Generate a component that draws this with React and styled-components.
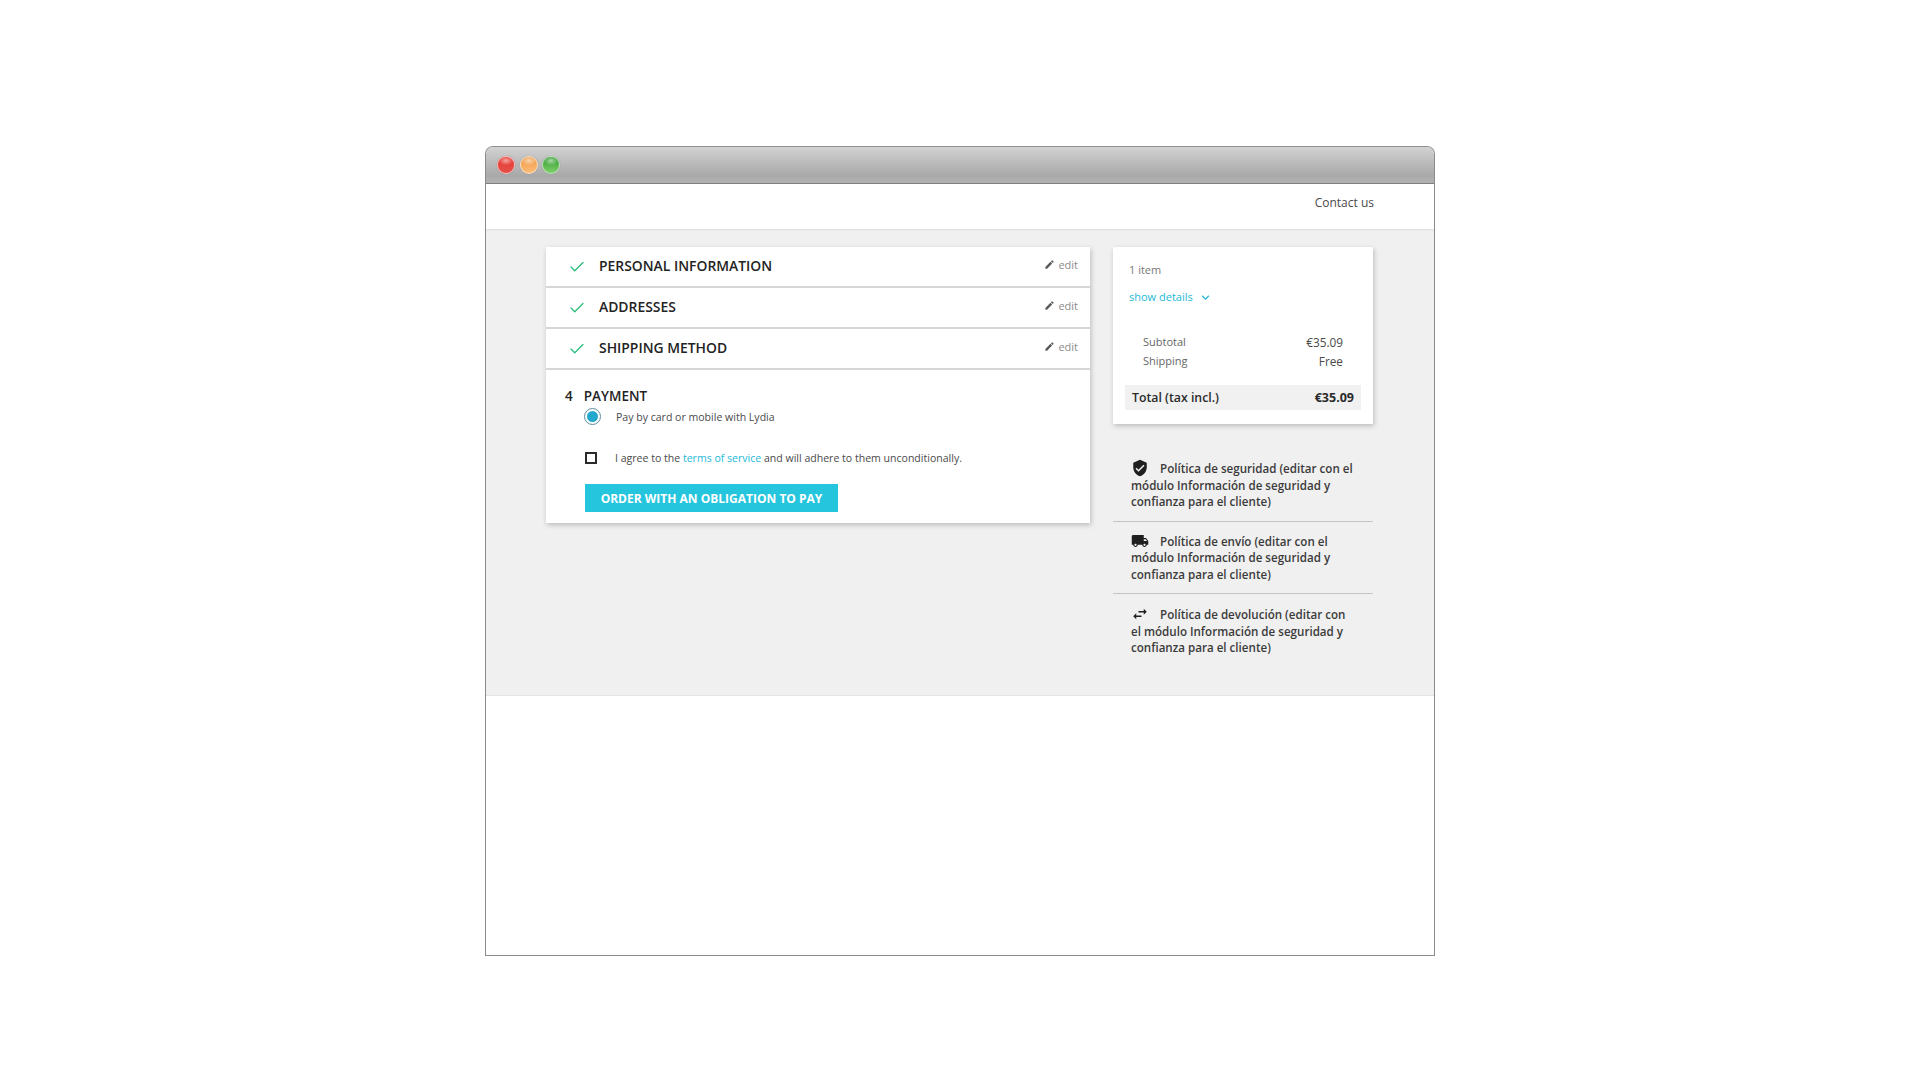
import React from "react";
import styled, { createGlobalStyle } from "styled-components";
import { Check } from "lucide-react";
import {
  MdEdit,
  MdKeyboardArrowDown,
  MdVerifiedUser,
  MdLocalShipping,
  MdSwapHoriz,
} from "react-icons/md";

const GlobalStyle = createGlobalStyle`
  html, body {
    margin: 0;
    background: #fff;
    font-family: "Open Sans", "Noto Sans", sans-serif;
    color: #3d3d3d;
  }
`;

const Page = styled.div`
  width: 1920px;
  height: 1080px;
  padding: 146px 0 0 485px;
  box-sizing: border-box;
`;

const Browser = styled.div`
  width: 950px;
  height: 810px;
  box-sizing: border-box;
  border: 1px solid #8a8a8a;
  border-top-color: #8f8f8f;
  border-radius: 8px 8px 0 0;
  display: flex;
  flex-direction: column;
  background: #fff;
  overflow: hidden;
`;

const TitleBar = styled.div`
  height: 37px;
  flex: none;
  display: flex;
  align-items: center;
  gap: 4.5px;
  padding: 0 0 1px 11px;
  box-sizing: border-box;
  background: linear-gradient(#d2d2d2 0%, #bdbdbd 40%, #a9a9a9 80%, #b2b2b2 100%);
  border-bottom: 1px solid #808080;
`;

const colors = {
  red: "#e8362f, #e4524a",
  orange: "#f09a45, #fbbc78",
  green: "#2f9b2e, #7fd06a",
};

const Light = styled.span`
  width: 18px;
  height: 18px;
  border-radius: 50%;
  box-sizing: border-box;
  border: 1px solid rgba(255, 255, 255, 0.6);
  background: radial-gradient(ellipse 45% 30% at 50% 22%, rgba(255, 255, 255, 0.55), transparent),
    linear-gradient(${(p) => colors[p.$color]});
  box-shadow: 0 0 1px rgba(0, 0, 0, 0.35);
`;

const TopBar = styled.header`
  height: 45px;
  flex: none;
  display: flex;
  justify-content: flex-end;
  align-items: center;
  padding: 0 60px 8px 0;
  box-sizing: border-box;
  font-size: 12px;
  color: #4a4a4a;
  box-shadow: 0 1px 2px rgba(0, 0, 0, 0.08);
  position: relative;
`;

const Main = styled.main`
  height: 467px;
  flex: none;
  box-sizing: border-box;
  background: #f0f0f0;
  padding: 18px 60px 0;
  display: flex;
  align-items: flex-start;
  gap: 23px;
  border-bottom: 1px solid #e4e4e4;
`;

const Steps = styled.section`
  width: 544px;
  flex: none;
  background: #fff;
  box-shadow: 1px 2px 5px rgba(0, 0, 0, 0.22);
`;

const DoneStep = styled.div`
  height: 41px;
  box-sizing: border-box;
  display: flex;
  align-items: center;
  padding: 0 12px 0 22px;
  border-bottom: 2px solid #d6d6d6;
  color: #2b7;
`;

const StepTitle = styled.h2`
  flex: 1;
  margin: 0 0 2px 13px;
  font-size: 13.9px;
  font-weight: 600;
  color: #232323;
`;

const EditLink = styled.a`
  display: flex;
  align-items: center;
  gap: 3px;
  margin-bottom: 5px;
  font-size: 11px;
  color: #8c8c8c;

  svg {
    color: #5a5a5a;
  }
`;

const PaymentStep = styled.div`
  padding: 17px 19px 11px;
`;

const PaymentTitle = styled.h2`
  display: flex;
  gap: 11px;
  margin: 0;
  font-size: 13.5px;
  line-height: 18px;
  font-weight: 600;
  color: #232323;
`;

const Option = styled.div`
  display: flex;
  align-items: center;
  margin-left: ${(p) => p.$indent}px;
  margin-top: ${(p) => p.$top}px;
  font-size: 10.55px;
  line-height: 16px;
  color: #4a4a4a;
`;

const Radio = styled.span`
  width: 17px;
  height: 17px;
  box-sizing: border-box;
  border-radius: 50%;
  border: 1px solid #5f8d9c;
  padding: 2px;
  margin-right: 15px;
  background: #24a9cd content-box;
`;

const Checkbox = styled.span`
  width: 12px;
  height: 12px;
  box-sizing: border-box;
  border: 2px solid #2b2b2b;
  margin-right: 18px;
`;

const TealLink = styled.a`
  color: #25b9d7;
`;

const PayButton = styled.button`
  display: block;
  width: 253px;
  height: 28px;
  margin: 18px 0 0 20px;
  padding: 0;
  border: 0;
  background: #25c5de;
  color: #fff;
  font-family: inherit;
  font-size: 12px;
  font-weight: 700;
`;

const Sidebar = styled.aside`
  width: 260px;
  flex: none;
`;

const SummaryCard = styled.section`
  height: 177px;
  box-sizing: border-box;
  background: #fff;
  padding: 15px 12px 0;
  box-shadow: 1px 2px 5px rgba(0, 0, 0, 0.22);
  font-size: 11px;
  color: #666;
`;

const ItemCount = styled.div`
  padding-left: 4px;
  line-height: 16px;
  color: #7a7a7a;
`;

const ShowDetails = styled.a`
  display: flex;
  align-items: center;
  gap: 5px;
  margin: 11px 0 0 4px;
  line-height: 16px;
  color: #25b9d7;
`;

const SummaryLine = styled.div`
  display: flex;
  justify-content: space-between;
  padding: 0 18px;
  margin-top: ${(p) => p.$top}px;
  line-height: 16px;
`;

const LineValue = styled.span`
  font-size: 11.8px;
  color: #4a4a4a;
`;

const TotalRow = styled.div`
  display: flex;
  justify-content: space-between;
  align-items: center;
  height: 25px;
  margin-top: 16px;
  padding: 0 7px;
  background: #f1f1f1;
  font-size: 12.3px;
  font-weight: 600;
  color: #2b2b2b;
`;

const TotalValue = styled.span`
  font-size: 12.5px;
  font-weight: 700;
`;

const Reassurance = styled.ul`
  list-style: none;
  margin: 24px 0 0;
  padding: 0;
`;

const Policy = styled.li`
  padding: 10px 18px 10px;
  font-size: 11.6px;
  line-height: 16.5px;
  font-weight: 600;
  color: #3b3b3b;
  border-bottom: 1px solid #c4c4c4;

  &:first-child {
    padding-top: 11px;
  }

  &:last-child {
    border-bottom: 0;
    padding-top: 11px;
  }

  svg {
    vertical-align: -4px;
    margin-right: 11px;
    color: #1f1f1f;
  }
`;

const Bottom = styled.footer`
  flex: 1;
  background: #fff;
`;

const done = ["PERSONAL INFORMATION", "ADDRESSES", "SHIPPING METHOD"];

const policies = [
  { Icon: MdVerifiedUser, text: "Política de seguridad (editar con el módulo Información de seguridad y confianza para el cliente)" },
  { Icon: MdLocalShipping, text: "Política de envío (editar con el módulo Información de seguridad y confianza para el cliente)" },
  { Icon: MdSwapHoriz, text: "Política de devolución (editar con el módulo Información de seguridad y confianza para el cliente)" },
];

export default function App() {
  return (
    <Page>
      <GlobalStyle />
      <Browser>
        <TitleBar>
          <Light $color="red" />
          <Light $color="orange" />
          <Light $color="green" />
        </TitleBar>
        <TopBar>Contact us</TopBar>
        <Main>
          <Steps>
            {done.map((title) => (
              <DoneStep key={title}>
                <Check size={18} strokeWidth={1.6} />
                <StepTitle>{title}</StepTitle>
                <EditLink>
                  <MdEdit size={11} />
                  edit
                </EditLink>
              </DoneStep>
            ))}
            <PaymentStep>
              <PaymentTitle>
                <span>4</span>
                <span>PAYMENT</span>
              </PaymentTitle>
              <Option $indent={19} $top={3}>
                <Radio />
                Pay by card or mobile with Lydia
              </Option>
              <Option $indent={20} $top={25}>
                <Checkbox />
                <span>
                  I agree to the <TealLink>terms of service</TealLink> and will adhere to them unconditionally.
                </span>
              </Option>
              <PayButton>ORDER WITH AN OBLIGATION TO PAY</PayButton>
            </PaymentStep>
          </Steps>
          <Sidebar>
            <SummaryCard>
              <ItemCount>1 item</ItemCount>
              <ShowDetails>
                show details
                <MdKeyboardArrowDown size={15} />
              </ShowDetails>
              <SummaryLine $top={29}>
                <span>Subtotal</span>
                <LineValue>€35.09</LineValue>
              </SummaryLine>
              <SummaryLine $top={3}>
                <span>Shipping</span>
                <LineValue>Free</LineValue>
              </SummaryLine>
              <TotalRow>
                <span>Total (tax incl.)</span>
                <TotalValue>€35.09</TotalValue>
              </TotalRow>
            </SummaryCard>
            <Reassurance>
              {policies.map(({ Icon, text }) => (
                <Policy key={text}>
                  <Icon size={18} />
                  {text}
                </Policy>
              ))}
            </Reassurance>
          </Sidebar>
        </Main>
        <Bottom />
      </Browser>
    </Page>
  );
}
